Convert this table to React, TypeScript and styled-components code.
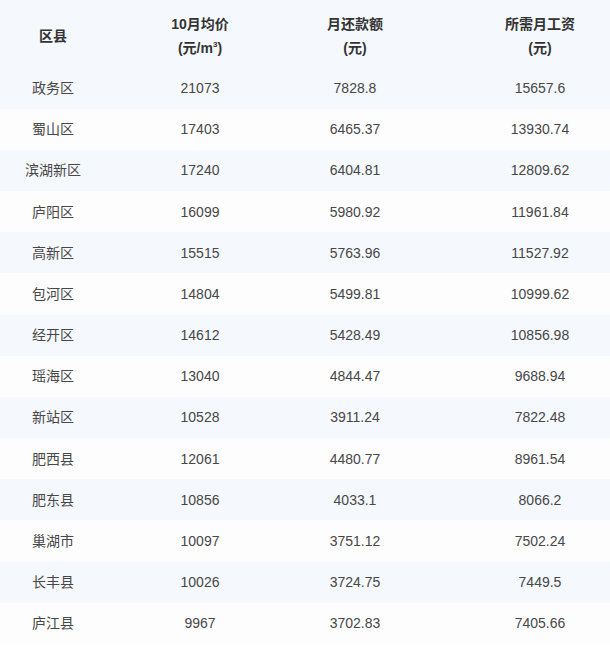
import React from 'react';
import styled, { createGlobalStyle } from 'styled-components';

const GlobalStyle = createGlobalStyle`
  html, body {
    margin: 0;
    padding: 0;
    background: #ffffff;
  }
  body {
    font-family: "Liberation Sans", Arial, "Noto Sans CJK SC", sans-serif;
    color: #3a3a3a;
  }
`;

interface Row {
  district: string;
  price: string;
  payment: string;
  salary: string;
}

const ROWS: Row[] = [
  { district: '政务区', price: '21073', payment: '7828.8', salary: '15657.6' },
  { district: '蜀山区', price: '17403', payment: '6465.37', salary: '13930.74' },
  { district: '滨湖新区', price: '17240', payment: '6404.81', salary: '12809.62' },
  { district: '庐阳区', price: '16099', payment: '5980.92', salary: '11961.84' },
  { district: '高新区', price: '15515', payment: '5763.96', salary: '11527.92' },
  { district: '包河区', price: '14804', payment: '5499.81', salary: '10999.62' },
  { district: '经开区', price: '14612', payment: '5428.49', salary: '10856.98' },
  { district: '瑶海区', price: '13040', payment: '4844.47', salary: '9688.94' },
  { district: '新站区', price: '10528', payment: '3911.24', salary: '7822.48' },
  { district: '肥西县', price: '12061', payment: '4480.77', salary: '8961.54' },
  { district: '肥东县', price: '10856', payment: '4033.1', salary: '8066.2' },
  { district: '巢湖市', price: '10097', payment: '3751.12', salary: '7502.24' },
  { district: '长丰县', price: '10026', payment: '3724.75', salary: '7449.5' },
  { district: '庐江县', price: '9967', payment: '3702.83', salary: '7405.66' }
];

const Table = styled.div`
  width: 610px;
  display: flex;
  flex-direction: column;
`;

const Line = styled.div<{ $shade: boolean; $head?: boolean }>`
  display: grid;
  grid-template-columns: 106px 188px 122px 1fr;
  align-items: center;
  height: ${(p) => (p.$head ? '67.4px' : '41.2px')};
  background: ${(p) => (p.$shade ? '#f5f8fc' : '#fdfdfe')};

  & > *:last-child {
    padding-left: 54px;
  }
`;

const HeadCell = styled.div`
  text-align: center;
  font-size: 14px;
  font-weight: bold;
  line-height: 24px;
  color: #333333;
  padding-top: 5px;
`;

const Cell = styled.div`
  text-align: center;
  font-size: 14px;
  line-height: 20px;
  color: #474747;
`;

const Sup = styled.sup`
  font-size: 8px;
  vertical-align: 6px;
  line-height: 0;
`;

export default function App(): React.ReactElement {
  return (
    <>
      <GlobalStyle />
      <Table>
        <Line $shade $head>
          <HeadCell>区县</HeadCell>
          <HeadCell>
            10月均价
            <br />
            (元/m<Sup>3</Sup>)
          </HeadCell>
          <HeadCell>
            月还款额
            <br />
            (元)
          </HeadCell>
          <HeadCell>
            所需月工资
            <br />
            (元)
          </HeadCell>
        </Line>
        {ROWS.map((row, i) => (
          <Line key={row.district} $shade={i % 2 === 0}>
            <Cell>{row.district}</Cell>
            <Cell>{row.price}</Cell>
            <Cell>{row.payment}</Cell>
            <Cell>{row.salary}</Cell>
          </Line>
        ))}
      </Table>
    </>
  );
}
